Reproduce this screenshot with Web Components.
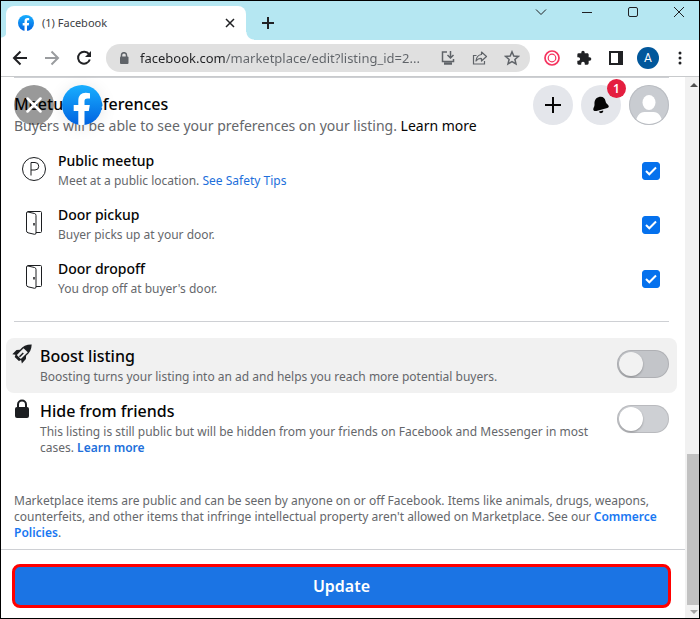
<!DOCTYPE html>
<html lang="en">
<head>
<meta charset="utf-8">
<meta name="viewport" content="width=device-width, initial-scale=1">
<title>(1) Facebook</title>
<style>
  body {
    margin: 0;
    font-family: "Noto Sans", "Open Sans", sans-serif;
    color: #050505;
    background: #fff;
  }
</style>
</head>
<body>
<browser-window>
  <tab-strip slot="tabs" label="(1) Facebook"></tab-strip>
  <tool-bar slot="toolbar" url="facebook.com/marketplace/edit?listing_id=2..."></tool-bar>
  <edit-listing slot="page">
    <floating-header slot="header" count="1"></floating-header>
    <meetup-option label="Public meetup" icon="parking">Meet at a public location. <a href="#safety">See Safety Tips</a></meetup-option>
    <meetup-option label="Door pickup" icon="door">Buyer picks up at your door.</meetup-option>
    <meetup-option label="Door dropoff" icon="door">You drop off at buyer's door.</meetup-option>
    <toggle-row slot="toggles" label="Boost listing" icon="rocket" hovered>Boosting turns your listing into an ad and helps you reach more potential buyers.</toggle-row>
    <toggle-row slot="toggles" label="Hide from friends" icon="padlock">This listing is still public but will be hidden from your friends on Facebook and Messenger in most cases. <a href="#hide">Learn more</a></toggle-row>
  </edit-listing>
  <scroll-bar slot="scroll"></scroll-bar>
</browser-window>

<script>
const reset = `
  * {
    padding: 0;
    margin: 0;
    box-sizing: border-box;
  }
  button {
    display: flex;
    align-items: center;
    justify-content: center;
    border: 0;
    background: none;
    font: inherit;
    color: inherit;
    cursor: pointer;
  }
  svg {
    display: block;
    flex: none;
  }
`;

const facebookLogo = (size) => `
  <svg width="${size}" height="${size}" viewBox="0 0 40 40" aria-hidden="true">
    <defs>
      <linearGradient id="blue" x1="0" y1="0" x2="0" y2="1">
        <stop offset="0" stop-color="#19afff"/>
        <stop offset="1" stop-color="#0062e0"/>
      </linearGradient>
    </defs>
    <circle cx="20" cy="20" r="20" fill="url(#blue)"/>
    <path fill="#fff" d="M16.300 39.800V26h-4.600v-6h4.600v-4.200c0-5.200 2.900-8 7.400-8 1.500 0 3 .2 4.300.5v5.100h-2.500c-2.300 0-3 1.300-3 2.900V20h5.300l-1 6h-4.300v13.800a20 20 0 0 1-6.200 0z"/>
  </svg>`;

const icons = {
  parking: `
    <svg width="24" height="24" viewBox="0 0 24 24" fill="none" stroke="#1c1e21">
      <circle cx="12" cy="12" r="11.500"/>
      <path d="M9 18.500V5.500h4a3.500 3.500 0 0 1 0 7.500H9"/>
    </svg>`,
  door: `
    <svg width="24" height="24" viewBox="0 0 24 24" fill="none" stroke="#1c1e21" stroke-linejoin="round">
      <path d="M5.500.5h13q1 0 1 1v19q0 1-1 1h-4.500"/>
      <path d="M4.500 2q0-1.300 1.500-1l6.500 1.500q1.500.4 1.500 2V22q0 1.500-1.500 1.300L6 21.800q-1.500-.4-1.500-2z"/>
      <path d="M12 12v2.500" stroke-width="1.500"/>
    </svg>`,
  rocket: `
    <svg width="20" height="20" viewBox="0 0 20 20">
      <path fill="#1c1e21" d="M19.700.4C14.500.3 10.800 2 8 5.800L4.500 6 .3 10.200l3.200.6-.8 2.200 4.200 4 2.200-1 .8 3.400 4-4.400.2-3.300C17.700 8.900 19.500 5.500 19.700.4z"/>
      <path fill="#f0f0f0" d="M11.500 4.200l4.300 4-7 6.800-4-3.900z"/>
      <path d="M7.500 12.800l3.800-3.900" stroke="#1c1e21" stroke-width="1.500"/>
    </svg>`,
  padlock: `
    <svg width="18" height="20" viewBox="0 0 18 20">
      <path fill="none" stroke="#1c1e21" stroke-width="2" d="M5 9V5.500a4 4 0 0 1 8 0V9"/>
      <rect x="2" y="8" width="14" height="11" rx="2" fill="#1c1e21"/>
    </svg>`,
};

class BrowserWindow extends HTMLElement {
  constructor() {
    super();
    this.attachShadow({ mode: 'open' }).innerHTML = `
      <style>
        ${reset}
        :host {
          display: flex;
          flex-direction: column;
          box-sizing: border-box;
          min-height: 100vh;
          border: 1px solid #000;
        }
        .view {
          display: flex;
          flex: 1;
        }
        slot[name="page"]::slotted(*) {
          flex: 1;
          min-width: 0;
        }
      </style>
      <slot name="tabs"></slot>
      <slot name="toolbar"></slot>
      <div class="view">
        <slot name="page"></slot>
        <slot name="scroll"></slot>
      </div>
    `;
  }
}

class TabStrip extends HTMLElement {
  connectedCallback() {
    this.attachShadow({ mode: 'open' }).innerHTML = `
      <style>
        ${reset}
        :host {
          display: flex;
          height: 39px;
          background: #b5e7f2;
          color: #3c4043;
        }
        .corner {
          align-self: flex-end;
          width: 5px;
          height: 8px;
          background: radial-gradient(circle at 0 0, transparent 5px, #fff 6px);
        }
        .corner.right {
          width: 8px;
          background: radial-gradient(circle at 8px 0, transparent 7px, #fff 8px);
        }
        .tab {
          display: flex;
          align-items: center;
          gap: 8px;
          flex: 0 1 240px;
          margin-top: 5px;
          padding: 0 8px 0 12px;
          border-radius: 8px 8px 0 0;
          background: #fff;
          font-size: 11px;
          line-height: 16px;
        }
        .tab span {
          flex: 1;
        }
        .close {
          width: 16px;
          height: 16px;
        }
        .new {
          width: 28px;
          margin-top: 5px;
        }
        .controls {
          display: flex;
          gap: 6px;
          margin-left: auto;
        }
        .controls button {
          width: 40px;
          height: 22px;
        }
      </style>
      <div class="corner"></div>
      <div class="tab">
        ${facebookLogo(16)}
        <span>${this.getAttribute('label')}</span>
        <button class="close" aria-label="Close tab">
          <svg width="10" height="10" viewBox="0 0 10 10" stroke="#202124" stroke-width="1.500"><path d="M1 1l8 8M9 1L1 9"/></svg>
        </button>
      </div>
      <div class="corner right"></div>
      <button class="new" aria-label="New tab">
        <svg width="12" height="12" viewBox="0 0 12 12" stroke="#202124" stroke-width="2"><path d="M6 0v12M0 6h12"/></svg>
      </button>
      <div class="controls">
        <button aria-label="Search tabs"><svg width="12" height="12" viewBox="0 0 12 12" fill="none" stroke="#202124"><path d="M1 3.500l5 5 5-5"/></svg></button>
        <button aria-label="Minimize"><svg width="10" height="10" viewBox="0 0 10 10" stroke="#202124"><path d="M0 5.500h10"/></svg></button>
        <button aria-label="Maximize"><svg width="10" height="10" viewBox="0 0 10 10" fill="none" stroke="#202124"><rect x=".5" y=".5" width="9" height="9" rx="1.500"/></svg></button>
        <button aria-label="Close"><svg width="10" height="10" viewBox="0 0 10 10" stroke="#202124"><path d="M0 0l10 10M10 0L0 10"/></svg></button>
      </div>
    `;
  }
}

class ToolBar extends HTMLElement {
  connectedCallback() {
    this.attachShadow({ mode: 'open' }).innerHTML = `
      <style>
        ${reset}
        :host {
          display: flex;
          align-items: center;
          height: 37px;
          padding: 0 3px;
          box-sizing: border-box;
          border-bottom: 1px solid #c8cacc;
        }
        button {
          width: 32px;
          height: 28px;
        }
        .omnibox {
          display: flex;
          align-items: center;
          flex: 1;
          min-width: 0;
          margin: 0 6px;
          padding: 0 2px 0 10px;
          border-radius: 14px;
          background: #e0e0e0;
        }
        .site {
          width: 16px;
          margin-right: 8px;
        }
        input {
          flex: 1;
          min-width: 0;
          height: 28px;
          border: 0;
          outline: 0;
          font: 13px/20px "Noto Sans", sans-serif;
          color: #5f6368;
          /* host name dark, rest of the address grey */
          background: linear-gradient(90deg, #202124 86px, #5f6368 86px);
          -webkit-background-clip: text;
          background-clip: text;
          -webkit-text-fill-color: transparent;
        }
        .user {
          display: flex;
          align-items: center;
          justify-content: center;
          width: 22px;
          height: 22px;
          border-radius: 50%;
          background: #01579b;
          color: #fff;
          font: 12px/22px Roboto, sans-serif;
        }
      </style>
      <button aria-label="Back"><svg width="16" height="16" viewBox="0 0 16 16" fill="none" stroke="#202124" stroke-width="2"><path d="M15 8H2M8.500 1.500L2 8l6.500 6.500"/></svg></button>
      <button aria-label="Forward"><svg width="16" height="16" viewBox="0 0 16 16" fill="none" stroke="#9a9c9f" stroke-width="2"><path d="M1 8h13M7.500 1.500L14 8l-6.500 6.500"/></svg></button>
      <button aria-label="Reload"><svg width="16" height="16" viewBox="0 0 16 16"><path fill="none" stroke="#202124" stroke-width="2" d="M13 4.200A6 6 0 1 0 13.800 9.500"/><path fill="#202124" d="M15 1v6H9z"/></svg></button>
      <div class="omnibox">
        <button class="site" aria-label="View site information"><svg width="10" height="13" viewBox="0 0 10 13"><path fill="none" stroke="#5f6368" stroke-width="1.500" d="M2.500 5V3a2.500 2.300 0 0 1 5 0v2"/><rect x="1" y="4.500" width="8.500" height="7.500" rx="1" fill="#5f6368"/></svg></button>
        <input type="text" aria-label="Address" value="${this.getAttribute('url')}">
        <button aria-label="Install app"><svg width="16" height="16" viewBox="0 0 16 16" fill="none" stroke="#5f6368" stroke-width="1.500"><path d="M7 2H2.500v9.500h11V9M10.500 1v6.500M7.500 5l3 3 3-3"/><path d="M4 13.500h8" stroke-width="2.500"/></svg></button>
        <button aria-label="Share"><svg width="16" height="16" viewBox="0 0 16 16" fill="none" stroke="#5f6368" stroke-width="1.200"><path d="M4.500 5.500H1.500v8.500h11V11"/><path stroke-linejoin="round" d="M9.500 2l5 4.500-5 4.500V8.500C7 8.300 5.500 9 4 11c.3-3.500 2-6 5.500-6.500z"/></svg></button>
        <button aria-label="Bookmark"><svg width="16" height="16" viewBox="0 0 16 16" fill="none" stroke="#5f6368" stroke-width="1.500"><path d="M8 1.800l1.800 4.200 4.600.4-3.500 3 1.100 4.500L8 11.500l-4 2.400 1.100-4.500-3.500-3L6.200 6z"/></svg></button>
      </div>
      <button aria-label="Recorder"><svg width="16" height="16" viewBox="0 0 16 16" fill="none" stroke="#f5335f"><circle cx="8" cy="8" r="7" stroke-width="1.700"/><circle cx="8" cy="8" r="3.800" stroke-width="1.200"/></svg></button>
      <button aria-label="Extensions"><svg width="16" height="16" viewBox="0 0 24 24" fill="#202124"><path d="M20.500 11H19V7c0-1.100-.9-2-2-2h-4V3.500a2.500 2.500 0 0 0-5 0V5H4a2 2 0 0 0-2 2v3.800h1.500a2.700 2.700 0 0 1 0 5.400H2V20c0 1.100.9 2 2 2h3.800v-1.500a2.700 2.700 0 0 1 5.400 0V22H17a2 2 0 0 0 2-2v-4h1.500a2.500 2.500 0 0 0 0-5z"/></svg></button>
      <button aria-label="Side panel"><svg width="14" height="14" viewBox="0 0 14 14"><path fill="#202124" fill-rule="evenodd" d="M0 0h14v14H0zM2 2v10h7V2z"/></svg></button>
      <button aria-label="Profile"><span class="user">A</span></button>
      <button aria-label="Menu"><svg width="4" height="14" viewBox="0 0 4 14" fill="#202124"><circle cx="2" cy="2" r="1.500"/><circle cx="2" cy="7" r="1.500"/><circle cx="2" cy="12" r="1.500"/></svg></button>
    `;
  }
}

class ScrollBar extends HTMLElement {
  constructor() {
    super();
    this.attachShadow({ mode: 'open' }).innerHTML = `
      <style>
        ${reset}
        :host {
          display: flex;
          flex-direction: column;
          width: 14px;
          background: #f1f1f1;
        }
        button {
          height: 16px;
          width: 100%;
          padding-left: 3px;
        }
        .space {
          flex: 360;
        }
        .thumb {
          flex: 151;
          margin-left: 2px;
          background: #c1c1c1;
        }
        .down {
          height: 13px;
        }
      </style>
      <button aria-label="Scroll up"><svg width="8" height="4" viewBox="0 0 8 4" fill="#505050"><path d="M0 4l4-4 4 4z"/></svg></button>
      <div class="space"></div>
      <div class="thumb"></div>
      <button class="down" aria-label="Scroll down"><svg width="8" height="4" viewBox="0 0 8 4" fill="#a3a3a3"><path d="M0 0h8L4 4z"/></svg></button>
    `;
  }
}

class FloatingHeader extends HTMLElement {
  connectedCallback() {
    this.attachShadow({ mode: 'open' }).innerHTML = `
      <style>
        ${reset}
        :host {
          display: flex;
          gap: 8px;
        }
        button {
          position: relative;
          width: 40px;
          height: 40px;
          border-radius: 50%;
          background: #e4e6eb;
        }
        .close {
          background: rgba(0, 0, 0, 0.4);
        }
        .home {
          margin-right: auto;
          background: none;
          box-shadow: 0 2px 16px rgba(0, 0, 0, 0.1);
        }
        .badge {
          position: absolute;
          top: -6px;
          right: -5px;
          width: 19px;
          height: 19px;
          border-radius: 50%;
          background: #e41e3f;
          color: #fff;
          font-size: 12px;
          font-weight: 600;
          line-height: 19px;
        }
      </style>
      <button class="close" aria-label="Close">
        <svg width="16" height="16" viewBox="0 0 16 16" stroke="#fff" stroke-width="2.500" stroke-linecap="round"><path d="M1.500 1.500l13 13M14.500 1.500l-13 13"/></svg>
      </button>
      <button class="home" aria-label="Facebook">${facebookLogo(40)}</button>
      <button aria-label="Create">
        <svg width="16" height="16" viewBox="0 0 16 16" stroke="#050505" stroke-width="2"><path d="M8 0v16M0 8h16"/></svg>
      </button>
      <button aria-label="Notifications">
        <svg width="18" height="18" viewBox="0 0 18 18" fill="#050505">
          <path d="M7 1c3.500-1 6 1 6.500 4 .3 2 1.200 2.600 2.600 4 1.200 1.200.8 2.700-.8 3.100L4.500 14.900c-2 .5-3.500-.3-3.200-2 .2-1.500 1.300-2.300 1.200-4.400C2.300 4.500 3.500 2 7 1z"/>
          <path d="M7 15.600l4.200-1.100c.2 1.500-.6 2.400-1.700 2.600-1.200.2-2.200-.4-2.500-1.500z"/>
        </svg>
        <span class="badge">${this.getAttribute('count')}</span>
      </button>
      <button aria-label="Your profile">
        <svg width="40" height="40" viewBox="0 0 40 40">
          <defs><clipPath id="round"><circle cx="20" cy="20" r="19"/></clipPath></defs>
          <circle cx="20" cy="20" r="20" fill="#b9bcc1"/>
          <g clip-path="url(#round)">
            <path fill="#c9ccd1" d="M0 0h40v40H0z"/>
            <ellipse cx="20" cy="17.500" rx="6.500" ry="7.500" fill="#fff"/>
            <path fill="#fff" d="M6.500 40c0-8 4-13 9-13h9c5 0 9 5 9 13z"/>
          </g>
        </svg>
      </button>
    `;
  }
}

class MeetupOption extends HTMLElement {
  connectedCallback() {
    this.attachShadow({ mode: 'open' }).innerHTML = `
      <style>
        ${reset}
        :host {
          display: block;
        }
        label {
          display: flex;
          align-items: center;
          gap: 12px;
          padding: 8px 9px 7px 8px;
        }
        .icon {
          padding-bottom: 4px;
        }
        .text {
          flex: 1;
        }
        h3 {
          font-size: 14px;
          font-weight: 500;
          line-height: 20px;
        }
        p {
          margin-top: 1px;
          font-size: 12px;
          line-height: 18px;
          color: #65676b;
        }
        ::slotted(a) {
          color: #216fdb;
          text-decoration: none;
        }
        .check {
          display: grid;
          place-items: center;
        }
        .check > * {
          grid-area: 1 / 1;
        }
        input {
          appearance: none;
          width: 18px;
          height: 18px;
          border: 1px solid #8a8d91;
          border-radius: 3px;
        }
        input:checked {
          border-color: #0571ed;
          background: #0571ed;
        }
        .check svg {
          pointer-events: none;
        }
        input:not(:checked) + svg {
          visibility: hidden;
        }
      </style>
      <label>
        <span class="icon">${icons[this.getAttribute('icon')]}</span>
        <div class="text">
          <h3>${this.getAttribute('label')}</h3>
          <p><slot></slot></p>
        </div>
        <span class="check">
          <input type="checkbox" checked>
          <svg width="12" height="10" viewBox="0 0 12 10" fill="none" stroke="#fff" stroke-width="2"><path d="M1 5l3.300 3.300L11 1.500"/></svg>
        </span>
      </label>
    `;
  }
}

class ToggleRow extends HTMLElement {
  connectedCallback() {
    this.attachShadow({ mode: 'open' }).innerHTML = `
      <style>
        ${reset}
        :host {
          --track: #ced0d4;
          --knob: #fff;
          display: block;
          border-radius: 8px;
        }
        :host([hovered]) {
          --track: #c3c5c9;
          --knob: #f2f2f2;
          background: #f1f1f1;
        }
        label {
          display: flex;
          gap: 8px;
          padding: 6px 8px 8px 6px;
        }
        .icon {
          display: flex;
          justify-content: center;
          width: 20px;
          height: 20px;
        }
        .text {
          flex: 1;
          padding-top: 2px;
        }
        h3 {
          margin-bottom: 2px;
          font-size: 16px;
          font-weight: 500;
          line-height: 21px;
        }
        p {
          font-size: 12px;
          line-height: 16px;
          color: #65676b;
        }
        ::slotted(a) {
          color: #216fdb;
          font-weight: 600;
          text-decoration: none;
        }
        input {
          appearance: none;
          flex: none;
          width: 52px;
          height: 28px;
          margin-top: 6px;
          padding: 1px;
          border: 1px solid rgba(0, 0, 0, 0.1);
          border-radius: 14px;
          background: var(--track);
        }
        input::before {
          content: "";
          display: block;
          width: 24px;
          height: 24px;
          border-radius: 50%;
          background: var(--knob);
          box-shadow: 0 1px 2px rgba(0, 0, 0, 0.3);
        }
        input:checked {
          padding-left: 25px;
          background: #1b74e4;
        }
      </style>
      <label>
        <span class="icon">${icons[this.getAttribute('icon')]}</span>
        <div class="text">
          <h3>${this.getAttribute('label')}</h3>
          <p><slot></slot></p>
        </div>
        <input type="checkbox" role="switch">
      </label>
    `;
  }
}

class EditListing extends HTMLElement {
  constructor() {
    super();
    this.attachShadow({ mode: 'open' }).innerHTML = `
      <style>
        ${reset}
        :host {
          display: flex;
          flex-direction: column;
          position: relative;
        }
        slot[name="header"]::slotted(*) {
          position: absolute;
          top: 8px;
          left: 13px;
          right: 16px;
        }
        .content {
          flex: 1;
          padding: 0 16px 7px 13px;
        }
        hr {
          border: 0;
          border-top: 1px solid #ced0d4;
        }
        h2 {
          margin-top: 16px;
          font-size: 16px;
          font-weight: 500;
          line-height: 20px;
        }
        .intro {
          margin-bottom: 6px;
          font-size: 14px;
          line-height: 23px;
          color: #65676b;
        }
        .intro a {
          color: #050505;
        }
        a {
          text-decoration: none;
        }
        .toggles {
          margin: 16px -8px 29px;
        }
        .options {
          margin-bottom: 16px;
        }
        .legal {
          font-size: 12px;
          line-height: 16px;
          color: #65676b;
        }
        .legal a {
          color: #1877f2;
          font-weight: 600;
        }
        footer {
          padding: 14px 14px 10px 11px;
          border-top: 1px solid #ced0d4;
        }
        footer button {
          width: 100%;
          height: 44px;
          border: 3px solid #f00;
          border-radius: 8px;
          background: #1b74e4;
          color: #fff;
          font-size: 16px;
          font-weight: 600;
          line-height: 20px;
        }
      </style>
      <div class="content">
        <hr>
        <h2>Meetup preferences</h2>
        <p class="intro">Buyers will be able to see your preferences on your listing. <a href="#meetup">Learn more</a></p>
        <div class="options"><slot></slot></div>
        <hr>
        <div class="toggles"><slot name="toggles"></slot></div>
        <p class="legal">Marketplace items are public and can be seen by anyone on or off Facebook. Items like animals, drugs, weapons, counterfeits, and other items that infringe intellectual property aren't allowed on Marketplace. See our <a href="#policies">Commerce Policies</a>.</p>
      </div>
      <footer><button>Update</button></footer>
      <slot name="header"></slot>
    `;
  }
}

customElements.define('browser-window', BrowserWindow);
customElements.define('tab-strip', TabStrip);
customElements.define('tool-bar', ToolBar);
customElements.define('scroll-bar', ScrollBar);
customElements.define('floating-header', FloatingHeader);
customElements.define('meetup-option', MeetupOption);
customElements.define('toggle-row', ToggleRow);
customElements.define('edit-listing', EditListing);
</script>
</body>
</html>
